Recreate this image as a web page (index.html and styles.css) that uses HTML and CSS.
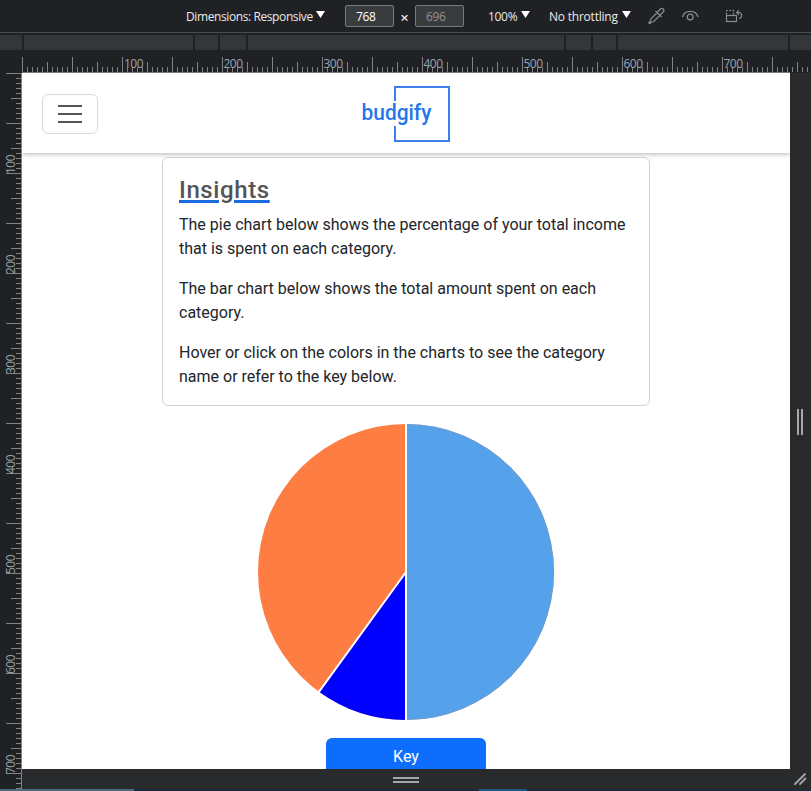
FILE: index.html
```html
<!DOCTYPE html>
<html lang="en">
<head>
<meta charset="utf-8">
<title>budgify</title>
<link rel="stylesheet" href="styles.css">
</head>
<body>
<div class="toolbar">
  <span class="device">Dimensions: Responsive</span><i class="caret"></i>
  <span class="size size-w">768</span>
  <span class="times">×</span>
  <span class="size size-h">696</span>
  <span class="zoom">100%</span><i class="caret"></i>
  <span class="throttle">No throttling</span><i class="caret"></i>
  <svg class="icons" width="100" height="20" viewBox="0 0 100 20" fill="none" stroke="#8b8e91" stroke-width="1.2">
    <path d="M9.300 6.500L3 12.800 2.200 15.200.8 16.800l.8.8L3.300 16.300 5.700 15.500 12 9.200M7.500 4.800l6.200 6.200M9.300 6.500L12.300 3q1.500-1.300 2.900 0t0 3L12 9.200"/>
    <path d="M34.500 11C36.500 3.400 48 3.400 50 11"/><circle cx="42.200" cy="11" r="2.900"/>
    <path d="M78.500 8.500V4.500H85.500V8.500" stroke-dasharray="2 1.300"/><rect x="78.500" y="9.500" width="10" height="6"/><path d="M88.700 6.500H91a2.600 3 0 0 1 0 6M91 4.200L88.700 6.500 91 8.800"/>
  </svg>
</div>
<div class="media">
  <i></i><i></i><i></i><i></i><i></i><i></i><i></i><i></i><i></i>
</div>
<svg class="ruler-x" width="811" height="22" viewBox="0 0 811 22">
  <defs>
    <pattern id="tx" x="22" y="0" width="50" height="22" patternUnits="userSpaceOnUse">
      <path d="M.5 6V21M5.500 16v5M10.500 16v5M15.500 16v5M20.500 16v5M25.500 11v10M30.500 16v5M35.500 16v5M40.500 16v5M45.500 16v5" stroke="#808285"/>
    </pattern>
  </defs>
  <rect x="22" width="789" height="22" fill="url(#tx)"/>
  <path d="M22 21.500H790" stroke="#77797b"/>
  <g class="marks"><text x="124" y="17">100</text><text x="223.500" y="17">200</text><text x="323.500" y="17">300</text><text x="423.500" y="17">400</text><text x="523.500" y="17">500</text><text x="623.500" y="17">600</text><text x="723.500" y="17">700</text></g>
</svg>
<div class="stage">
  <svg class="ruler-y" width="22" height="716" viewBox="0 0 22 716">
    <defs>
      <pattern id="ty" width="22" height="50" patternUnits="userSpaceOnUse">
        <path d="M6 .5H22M16 5.500h6M16 10.500h6M16 15.500h6M16 20.500h6M11 25.500h11M16 30.500h6M16 35.500h6M16 40.500h6M16 45.500h6" stroke="#808285"/>
      </pattern>
    </defs>
    <rect width="22" height="716" fill="url(#ty)"/>
    <path d="M21.500 0V716" stroke="#808285"/>
    <g class="marks" transform="rotate(-90)"><text x="-101" y="15">100</text><text x="-201" y="15">200</text><text x="-301" y="15">300</text><text x="-401" y="15">400</text><text x="-501" y="15">500</text><text x="-601" y="15">600</text><text x="-701" y="15">700</text></g>
  </svg>
  <main class="page">
    <nav class="navbar">
      <button class="toggler" aria-label="Menu"><i></i><i></i><i></i></button>
      <svg class="logo" width="92" height="60" viewBox="0 0 92 60">
        <path d="M35 17V3H89V57H35V42" fill="none" stroke="#3b7fe8" stroke-width="2"/>
        <text x="1.500" y="36" textLength="70" lengthAdjust="spacingAndGlyphs">budgify</text>
      </svg>
    </nav>
    <section class="card">
      <h1>Insights</h1>
      <p>The pie chart below shows the percentage of your total income that is spent on each category.</p>
      <p>The bar chart below shows the total amount spent on each category.</p>
      <p>Hover or click on the colors in the charts to see the category name or refer to the key below.</p>
    </section>
    <svg class="pie" width="296" height="296" viewBox="-148 -148 296 296">
      <circle r="148" fill="#fe7d43"/>
      <path d="M0 0V-148A148 148 0 0 1 0 148Z" fill="#55a1ea"/>
      <path d="M0 0V148A148 148 0 0 1-87 119.730Z" fill="#00f"/>
      <path d="M0-149V149M0 0L-88 121.100" stroke="#fff" stroke-width="2"/>
    </svg>
    <button class="key">Key</button>
  </main>
  <div class="grip-right"><i></i><i></i></div>
  <div class="grip-bottom"><i></i><i></i></div>
  <svg class="grip-corner" width="21" height="20" viewBox="0 0 21 20"><path d="M5 15L15 5M10 15L15.500 9.500" stroke="#a5a7a8" stroke-width="1.800" stroke-linecap="round"/></svg>
</div>
<div class="taskbar"><i class="tab-a"></i><i class="tab-b"></i></div>
</body>
</html>
```
FILE: styles.css
```css
* { box-sizing: border-box; }
body { margin: 0; width: 811px; height: 791px; overflow: hidden; background: #202124; font-family: Roboto, sans-serif; }
i { display: block; }

.toolbar { height: 33px; display: flex; align-items: center; padding-left: 186px; border-bottom: 1px solid #494c50; color: #e8eaed; font: 12px "Open Sans", sans-serif; white-space: nowrap; }
.toolbar > * { flex: none; }
.device { width: 128px; letter-spacing: -.4px; }
.caret { width: 9px; height: 7px; margin: 0 0 3px 2px; background: #fff; clip-path: polygon(0 0, 100% 0, 50% 100%); }
.size { width: 49px; height: 22px; padding-left: 10px; border: 1px solid #77797b; border-radius: 2px; background: #3a3b3c; line-height: 21px; letter-spacing: -.3px; }
.size-w { margin-left: 20px; color: #fff; }
.size-h { color: #919395; }
.times { width: 21px; text-align: center; padding-top: 2px; font-size: 15px; font-weight: 600; }
.zoom { width: 31px; margin-left: 24px; letter-spacing: -.3px; }
.throttle { width: 71px; margin-left: 19px; letter-spacing: -.22px; }
.icons { margin-left: 17px; }

.media { height: 15px; margin: 2px 0 1px; display: grid; grid-template-columns: 22px 169px 23px 26px 316px 25px 23px 170px 1fr; gap: 2px; }
.media i { background: #35363a; }

.ruler-x, .ruler-y { display: block; }
.marks { fill: #9aa5ad; font: 12px "Open Sans", sans-serif; letter-spacing: -.5px; }

.stage { height: 716px; display: grid; grid-template: 696px 20px / 22px 768px 21px; background: #292a2b; }
.ruler-y { grid-row: 1 / 3; background: #202124; }
.page { overflow: hidden; background: #fff; display: flex; flex-direction: column; align-items: center; }

.navbar { width: 100%; height: 80px; flex: none; padding: 0 20px; display: grid; grid-template-columns: 1fr auto 1fr; align-items: center; box-shadow: 0 1px 5px rgba(0, 0, 0, .3); }
.toggler { width: 56px; height: 40px; margin-top: 2px; padding: 0; border: 1px solid #dadada; border-radius: 6px; background: #fff; display: flex; flex-direction: column; align-items: center; justify-content: center; gap: 6px; }
.toggler i { width: 24px; height: 2px; background: #555; }
.logo { display: block; margin-top: 2px; }
.logo text { fill: #2476eb; font: 500 21.5px Roboto, sans-serif; }

.card { width: 488px; height: 249px; flex: none; margin-top: 4px; padding: 17px 16px 15px; border: 1px solid #d0d0d0; border-radius: 6px; background: #fff; color: #212529; }
.card h1 { margin: 0 0 8px; color: #555; font-size: 24px; line-height: 30px; font-weight: 500; letter-spacing: .6px; text-decoration: underline #1b6be0 3px; text-underline-offset: 2px; }
.card p { margin: 0 0 16px; font-size: 16px; line-height: 24px; }

.pie { flex: none; margin-top: 18px; }
.key { flex: none; width: 160px; height: 38px; margin-top: 18px; padding: 0 0 2px; border: 0; border-radius: 6px; background: #0d6efd; color: #fff; font: 16px Roboto, sans-serif; }

.grip-right { display: flex; align-items: center; justify-content: center; gap: 2px; padding: 2px 1px 0 0; }
.grip-right i { width: 2px; height: 26px; background: #a5a7a8; }
.grip-bottom { grid-column: 2; display: flex; flex-direction: column; align-items: center; justify-content: center; gap: 2px; padding-top: 2px; }
.grip-bottom i { width: 26px; height: 2px; background: #a5a7a8; }

.taskbar { height: 2px; display: flex; background: #1b2b3c; }
.tab-a { width: 134px; background: #49687d; }
.tab-b { width: 48px; margin-left: 345px; background: #205680; }
```
